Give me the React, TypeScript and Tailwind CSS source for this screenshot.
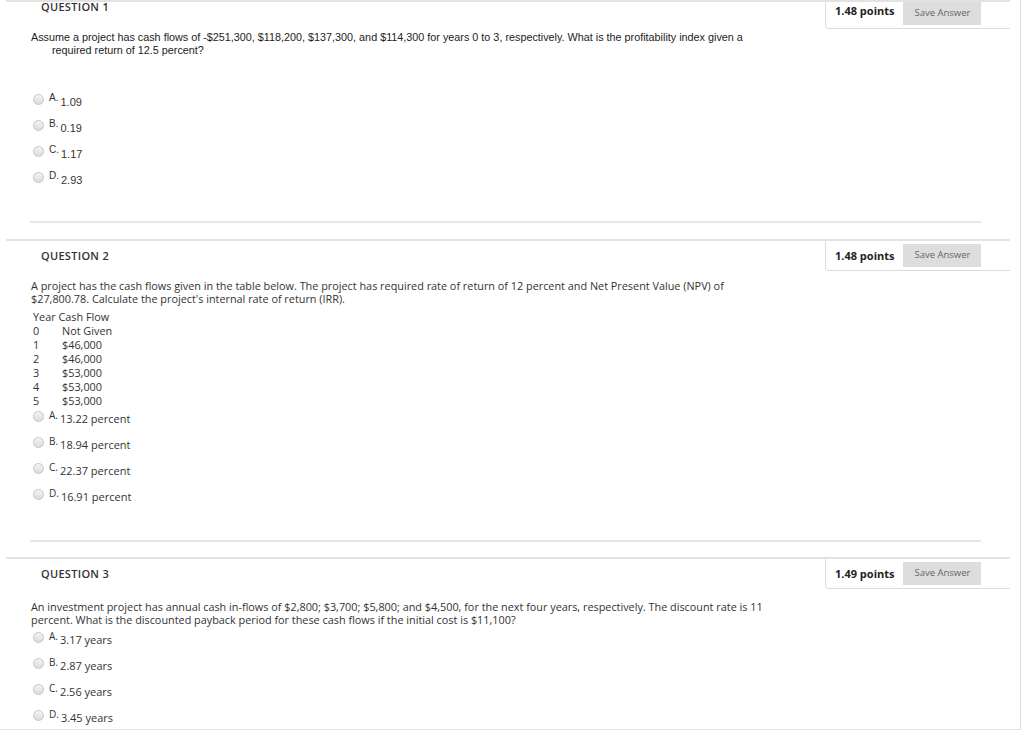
import React from "react";

type Option = { letter: string; value: string };

const open = "font-['Open_Sans',sans-serif]";
const arial = "font-['Liberation_Sans',Arial,sans-serif]";

const Radio = () => (
  <span className="mt-[3px] inline-block h-[11px] w-[11px] shrink-0 rounded-full border border-[#c4c4c4] bg-gradient-to-b from-[#f4f4f4] to-[#dcdcdc]" />
);

const Options = ({ items, font }: { items: Option[]; font: string }) => (
  <div className={`flex flex-col gap-[8px] pl-[33px] ${font}`}>
    {items.map((o) => (
      <div key={o.letter} className="flex items-start text-[#333]">
        <Radio />
        <span className="ml-[5px] text-[10px] leading-[14px]">{o.letter}</span>
        <span className="ml-[2px] mt-[4px] text-[11px] leading-[14px]">{o.value}</span>
      </div>
    ))}
  </div>
);

const Header = ({ n, points, compact }: { n: number; points: string; compact?: boolean }) => (
  <div className={`ml-[6px] flex w-[1004px] justify-between border-t-2 border-[#e2e2e2] ${open}`}>
    <div
      className={`pl-[35px] text-[11px] font-semibold tracking-[0.3px] text-[#333] ${
        compact ? "pt-0 leading-[10px]" : "pt-[7px] leading-[15px]"
      }`}
    >
      QUESTION {n}
    </div>
    <div
      className={`flex w-[185px] items-start gap-[9px] rounded-bl-[4px] border-b border-l border-[#dcdcdc] pl-[9px] ${
        compact ? "h-[27px] pt-0" : "h-[30px] pt-[3px]"
      }`}
    >
      <span className={`text-[11px] font-bold text-[#222] ${compact ? "mt-[1px]" : "mt-[4px]"}`}>{points}</span>
      <button className="h-[23px] w-[78px] bg-[#dddddd] text-[9.5px] text-[#666]">Save Answer</button>
    </div>
  </div>
);

const Separator = () => <div className="ml-[30px] h-[2px] w-[951px] bg-[#e6e6e6]" />;

export default function App() {
  return (
    <div className="h-[730px] w-[1024px] overflow-hidden bg-white">
      <div className="h-[730px] w-[1021px] border-r border-[#dcdcdc]">
        <Header n={1} points="1.48 points" compact />
        <div className={`mt-[2px] pl-[31px] text-[10.8px] leading-[13px] text-[#222] ${arial}`}>
          <div className="whitespace-nowrap">
            Assume a project has cash flows of -$251,300, $118,200, $137,300, and $114,300 for years 0 to 3, respectively. What is
            the profitability index given a
          </div>
          <div className="pl-[21px]">required return of 12.5 percent?</div>
        </div>
        <div className="mt-[34px]">
          <Options
            font={arial}
            items={[
              { letter: "A.", value: "1.09" },
              { letter: "B.", value: "0.19" },
              { letter: "C.", value: "1.17" },
              { letter: "D.", value: "2.93" },
            ]}
          />
        </div>
        <div className="mt-[34px]">
          <Separator />
        </div>

        <div className="mt-[16px]">
          <Header n={2} points="1.48 points" />
        </div>
        <div className={`mt-[8px] pl-[31px] text-[10.85px] leading-[13px] text-[#333] ${open}`}>
          <div className="whitespace-nowrap">
            A project has the cash flows given in the table below. The project has required rate of return of 12 percent and
            Net Present Value (NPV) of
          </div>
          <div>$27,800.78. Calculate the project's internal rate of return (IRR).</div>
          <div className="mt-[5px] pl-[2px] leading-[14px]">
            <div>Year Cash Flow</div>
            {[
              ["0", "Not Given"],
              ["1", "$46,000"],
              ["2", "$46,000"],
              ["3", "$53,000"],
              ["4", "$53,000"],
              ["5", "$53,000"],
            ].map(([y, v]) => (
              <div key={y} className="flex">
                <span className="w-[29px]">{y}</span>
                <span>{v}</span>
              </div>
            ))}
          </div>
        </div>
        <Options
          font={open}
          items={[
            { letter: "A.", value: "13.22 percent" },
            { letter: "B.", value: "18.94 percent" },
            { letter: "C.", value: "22.37 percent" },
            { letter: "D.", value: "16.91 percent" },
          ]}
        />
        <div className="mt-[36px]">
          <Separator />
        </div>

        <div className="mt-[15px]">
          <Header n={3} points="1.49 points" />
        </div>
        <div className={`mt-[11px] pl-[31px] text-[10.85px] leading-[13px] text-[#333] ${open}`}>
          <div className="whitespace-nowrap">
            An investment project has annual cash in-flows of $2,800; $3,700; $5,800; and $4,500, for the next four years,
            respectively. The discount rate is 11
          </div>
          <div>percent. What is the discounted payback period for these cash flows if the initial cost is $11,100?</div>
        </div>
        <div className="mt-[3px]">
          <Options
            font={open}
            items={[
              { letter: "A.", value: "3.17 years" },
              { letter: "B.", value: "2.87 years" },
              { letter: "C.", value: "2.56 years" },
              { letter: "D.", value: "3.45 years" },
            ]}
          />
        </div>
        <div className="mt-[4px] h-[2px] w-[1021px] bg-[#e2e2e2]" />
      </div>
    </div>
  );
}
